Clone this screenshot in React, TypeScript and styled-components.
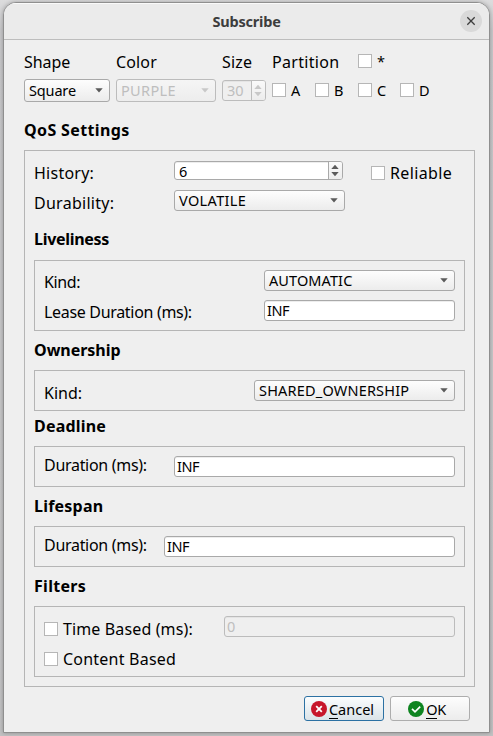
import React from 'react';
import styled, { createGlobalStyle, css } from 'styled-components';

const GlobalStyle = createGlobalStyle`
  * { box-sizing: border-box; }
  html, body { margin: 0; padding: 0; }
  body {
    width: 493px;
    height: 736px;
    overflow: hidden;
    background: linear-gradient(to bottom, #dcdcdd 0, #c9c9cb 30px, #c6c6c8 600px, #c2c2c3 736px);
    font-family: "Noto Sans", "Open Sans", sans-serif;
    color: #000;
  }
`;

const Desktop = styled.div`
  height: 736px;
  padding: 2px 3px 3px;
`;

const Window = styled.main`
  width: 487px;
  height: 731px;
  border: 1px solid #8f8f8f;
  border-radius: 13px 13px 0 0;
  background: #efefef;
  overflow: hidden;
  box-shadow: 0 0 4px rgba(0, 0, 0, 0.28);
`;

const TitleBar = styled.header`
  display: grid;
  grid-template-columns: 1fr 22px;
  align-items: center;
  height: 37px;
  padding: 0 7px 0 29px;
  border-bottom: 1px solid #bdbdbd;
  background: #ebebeb;
  box-shadow: inset 0 1px 0 #fafafa;
`;

const Title = styled.h1`
  margin: -1px 0 0;
  font-size: 14.5px;
  line-height: 20px;
  font-weight: 700;
  letter-spacing: -0.2px;
  color: #3d3d3d;
  text-align: center;
`;

const CloseButton = styled.button`
  display: flex;
  align-items: center;
  justify-content: center;
  width: 22px;
  height: 22px;
  padding: 0;
  border: 0;
  border-radius: 50%;
  background: #d9d9d9;
`;

const Body = styled.div`
  padding: 12px 14px 0 20px;
`;

const Columns = styled.div<{ $height: number }>`
  display: grid;
  grid-template-columns: 92px 106px 50px 43px 43px 42px 1fr;
  align-items: start;
  height: ${(p) => p.$height}px;
`;

const Label = styled.span<{ $track?: number; $top?: number; $span?: number }>`
  display: block;
  font-size: 16px;
  line-height: 20px;
  white-space: nowrap;
  letter-spacing: ${(p) => p.$track ?? 0}px;
  margin-top: ${(p) => p.$top ?? 0}px;
  ${(p) => p.$span && css`grid-column: span ${p.$span};`}
`;

const Heading = styled.h2<{ $track?: number; $gap?: number }>`
  margin: 0 0 ${(p) => p.$gap ?? 10}px;
  font-size: 16px;
  line-height: 20px;
  font-weight: 700;
  white-space: nowrap;
  letter-spacing: ${(p) => p.$track ?? 0}px;
`;

const controlBox = css<{ $w: number; $h?: number; $disabled?: boolean; $track?: number }>`
  display: flex;
  align-items: center;
  flex: none;
  width: ${(p) => p.$w}px;
  height: ${(p) => p.$h ?? 21}px;
  border: 1px solid ${(p) => (p.$disabled ? '#bcbcbc' : '#a9a9a9')};
  border-radius: 3px;
  font-size: 14.5px;
  line-height: 19px;
  white-space: nowrap;
  letter-spacing: ${(p) => p.$track ?? 0}px;
  color: ${(p) => (p.$disabled ? '#bebebe' : '#000')};
`;

const Combo = styled.div`
  ${controlBox}
  justify-content: space-between;
  padding: 0 6px 0 4px;
  background: ${(p) => (p.$disabled ? 'linear-gradient(#f5f5f5, #ededed)' : 'linear-gradient(#fdfdfd, #ececec)')};
`;

const Field = styled.div`
  ${controlBox}
  padding-left: 2px;
  background: ${(p) => (p.$disabled ? '#efefef' : '#fff')};
  box-shadow: inset 0 1px 0 ${(p) => (p.$disabled ? '#e4e4e4' : '#ededed')};
`;

const Spin = styled.div`
  ${controlBox}
  align-items: stretch;
  justify-content: space-between;
  padding-left: 4px;
  overflow: hidden;
  background: ${(p) => (p.$disabled ? '#efefef' : '#fff')};
  box-shadow: inset 0 1px 0 ${(p) => (p.$disabled ? '#e4e4e4' : '#ededed')};
`;

const SpinButtons = styled.span<{ $disabled?: boolean }>`
  display: flex;
  align-items: center;
  justify-content: center;
  width: 14px;
  padding-right: 1px;
  border-left: 1px solid ${(p) => (p.$disabled ? '#bcbcbc' : '#a9a9a9')};
  background: linear-gradient(#fafafa, #ececec);
`;

const Check = styled.span<{ $top?: number }>`
  flex: none;
  width: 14px;
  height: 14px;
  margin-top: ${(p) => p.$top ?? 0}px;
  border: 1px solid #b6b6b6;
  background: #fff;
`;

const Option = styled.span<{ $gap: number; $top?: number }>`
  display: flex;
  align-items: flex-start;
  gap: ${(p) => p.$gap}px;
  padding-top: ${(p) => p.$top ?? 0}px;
`;

const OptionName = styled.span<{ $top: number }>`
  font-size: 14.5px;
  line-height: 20px;
  margin-top: ${(p) => p.$top}px;
`;

const Settings = styled.section`
  width: 451px;
  height: 537px;
  padding: 10px 9px 0;
  border: 1px solid #b5b5b5;
`;

const TopRow = styled.div<{ $height: number }>`
  display: grid;
  grid-template-columns: 140px 197px 1fr;
  align-items: start;
  height: ${(p) => p.$height}px;
`;

const Group = styled.section<{ $after: number }>`
  margin-bottom: ${(p) => p.$after}px;
`;

const Frame = styled.div`
  display: grid;
  row-gap: 9px;
  padding: 9px;
  border: 1px solid #b5b5b5;
`;

const Row = styled.div`
  display: flex;
  justify-content: space-between;
  align-items: flex-start;
  height: 21px;
`;

const Actions = styled.footer`
  display: flex;
  justify-content: flex-end;
  gap: 6px;
  padding: 9px 5px 0 0;
`;

const ActionButton = styled.button<{ $focused?: boolean; $track?: number; $shift?: number }>`
  display: flex;
  align-items: center;
  justify-content: center;
  gap: 2px;
  width: 80px;
  height: 25px;
  padding: 0 ${(p) => p.$shift ?? 3}px 0 0;
  border: 1px solid ${(p) => (p.$focused ? '#2c71a3' : '#adadad')};
  border-radius: 3px;
  background: ${(p) => (p.$focused ? 'linear-gradient(#fbfdfe, #dae3e8)' : 'linear-gradient(#fdfdfd, #ececec)')};
  font: 14.5px/21px "Noto Sans", sans-serif;
  letter-spacing: ${(p) => p.$track ?? 0}px;
  color: #000;
`;

const Mnemonic = styled.span`
  display: inline-block;
  height: 20px;
  line-height: 20px;
  border-bottom: 1px solid #000;
`;

const Caption = styled.span`
  display: flex;
  align-items: flex-start;
  height: 19px;
  line-height: 20px;
`;

const Arrow = ({ disabled }: { disabled?: boolean }) => (
  <svg width="8" height="5" viewBox="0 0 8 5">
    <path d="M0.3 0.3h7.4L4 4.5z" fill={disabled ? '#c8c8c8' : '#5a5a5a'} />
  </svg>
);

const SpinArrows = ({ disabled }: { disabled?: boolean }) => (
  <svg width="8" height="13" viewBox="0 0 8 13">
    <path d="M0.3 5h7.4L4 0.8zM0.3 8h7.4L4 12.2z" fill={disabled ? '#c8c8c8' : '#5a5a5a'} />
  </svg>
);

export default function App() {
  return (
    <>
      <GlobalStyle />
      <Desktop>
        <Window>
          <TitleBar>
            <Title>Subscribe</Title>
            <CloseButton aria-label="Close">
              <svg width="10" height="10" viewBox="0 0 10 10">
                <path d="M1.3 1.3l7.4 7.4M8.7 1.3L1.3 8.7" stroke="#3d3d3d" strokeWidth="1.3" />
              </svg>
            </CloseButton>
          </TitleBar>
          <Body>
            <Columns $height={27}>
              <Label $track={-0.05}>Shape</Label>
              <Label $track={0.15}>Color</Label>
              <Label $track={0.15}>Size</Label>
              <Label $track={0.3} $span={2}>Partition</Label>
              <Option $gap={5} $top={2}>
                <Check />
                <OptionName $top={-3}>*</OptionName>
              </Option>
            </Columns>
            <Columns $height={41}>
              <Combo $w={86} $h={23} $track={-0.15}>Square<Arrow /></Combo>
              <Combo $w={100} $h={23} $disabled $track={0.35}>PURPLE<Arrow disabled /></Combo>
              <Option $gap={0} $top={1}>
                <Spin $w={44} $disabled>
                  30
                  <SpinButtons $disabled><SpinArrows disabled /></SpinButtons>
                </Spin>
              </Option>
              {['A', 'B', 'C', 'D'].map((name) => (
                <Option key={name} $gap={5} $top={4}>
                  <Check />
                  <OptionName $top={-3}>{name}</OptionName>
                </Option>
              ))}
            </Columns>
            <Heading $track={0.36}>QoS Settings</Heading>

            <Settings>
              <TopRow $height={29}>
                <Label $track={0.25} $top={2}>History:</Label>
                <Spin $w={169} $h={19}>
                  6
                  <SpinButtons><SpinArrows /></SpinButtons>
                </Spin>
                <Option $gap={5}>
                  <Check $top={5} />
                  <Label $track={0.36} $top={2}>Reliable</Label>
                </Option>
              </TopRow>
              <TopRow $height={39}>
                <Label $track={0.27} $top={3}>Durability:</Label>
                <Combo $w={171} $track={0.36}>VOLATILE<Arrow /></Combo>
              </TopRow>

              <Group $after={9}>
                <Heading $track={-0.3} $gap={11}>Liveliness</Heading>
                <Frame>
                  <Row>
                    <Label $track={-0.4} $top={2}>Kind:</Label>
                    <Combo $w={191} $track={0.1}>AUTOMATIC<Arrow /></Combo>
                  </Row>
                  <Row>
                    <Label $track={-0.32} $top={2}>Lease Duration (ms):</Label>
                    <Field $w={191} $track={-0.5}>INF</Field>
                  </Row>
                </Frame>
              </Group>

              <Group $after={5}>
                <Heading $track={-0.03}>Ownership</Heading>
                <Frame>
                  <Row>
                    <Label $top={3}>Kind:</Label>
                    <Combo $w={201} $track={0.19}>SHARED_OWNERSHIP<Arrow /></Combo>
                  </Row>
                </Frame>
              </Group>

              <Group $after={9}>
                <Heading $track={0.2}>Deadline</Heading>
                <Frame>
                  <Row>
                    <Label $track={-0.3} $top={-1}>Duration (ms):</Label>
                    <Field $w={281} $track={-0.5}>INF</Field>
                  </Row>
                </Frame>
              </Group>

              <Group $after={9}>
                <Heading $track={0.22}>Lifespan</Heading>
                <Frame>
                  <Row>
                    <Label $track={-0.3} $top={-1}>Duration (ms):</Label>
                    <Field $w={291} $track={-0.5}>INF</Field>
                  </Row>
                </Frame>
              </Group>

              <Group $after={9}>
                <Heading $track={0.3}>Filters</Heading>
                <Frame>
                  <Row>
                    <Option $gap={5}>
                      <Check $top={6} />
                      <Label $track={0.13} $top={3}>Time Based (ms):</Label>
                    </Option>
                    <Field $w={231} $disabled>0</Field>
                  </Row>
                  <Row>
                    <Option $gap={5}>
                      <Check $top={6} />
                      <Label $track={0.22} $top={3}>Content Based</Label>
                    </Option>
                  </Row>
                </Frame>
              </Group>
            </Settings>

            <Actions>
              <ActionButton $focused>
                <svg width="16" height="16" viewBox="0 0 16 16">
                  <circle cx="8" cy="8" r="8" fill="#c7162b" />
                  <path d="M5.2 5.2l5.6 5.6M10.8 5.2l-5.6 5.6" stroke="#fff" strokeWidth="1.8" />
                </svg>
                <Caption><Mnemonic>C</Mnemonic>ancel</Caption>
              </ActionButton>
              <ActionButton $track={-0.4} $shift={6}>
                <svg width="16" height="16" viewBox="0 0 16 16">
                  <circle cx="8" cy="8" r="8" fill="#0e8420" />
                  <path d="M4 7.8l3 3 5.2-5.2" fill="none" stroke="#fff" strokeWidth="1.7" />
                </svg>
                <Caption><Mnemonic>O</Mnemonic>K</Caption>
              </ActionButton>
            </Actions>
          </Body>
        </Window>
      </Desktop>
    </>
  );
}
